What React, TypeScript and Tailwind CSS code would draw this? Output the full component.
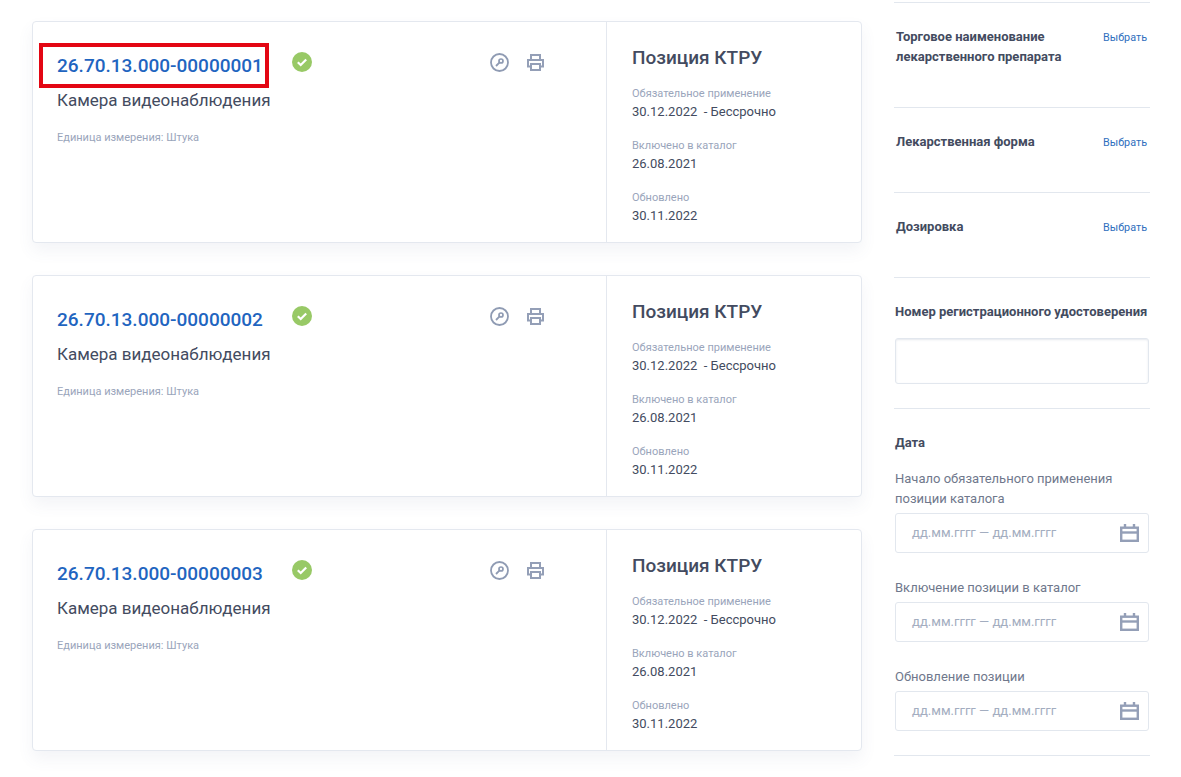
const CARDS = ['26.70.13.000-00000001', '26.70.13.000-00000002', '26.70.13.000-00000003']

function CheckBadge() {
  return (
    <svg width="20" height="20" viewBox="0 0 20 20">
      <circle cx="10" cy="10" r="10" fill="#98c966" />
      <path d="M5.8 10.2l2.9 2.8 5.5-5.6" fill="none" stroke="#fff" strokeWidth="2.2" />
    </svg>
  )
}

function KeyIcon() {
  return (
    <svg width="19" height="19" viewBox="0 0 19 19" fill="none" stroke="#8f9bb3">
      <circle cx="9.5" cy="9.5" r="8.5" strokeWidth="1.8" />
      <circle cx="11" cy="8" r="2" strokeWidth="1.7" />
      <path d="M9.6 9.4L6 13" strokeWidth="1.8" />
    </svg>
  )
}

function PrintIcon() {
  return (
    <svg width="17" height="17" viewBox="0 0 17 17" fill="none" stroke="#949fb7" strokeWidth="2">
      <path d="M4 6V1h9v5" />
      <path d="M4 12.5H1V6h15v6.5h-3" />
      <path d="M4 10h9v6H4z" />
    </svg>
  )
}

function CalendarIcon() {
  return (
    <svg width="19" height="18" viewBox="0 0 19 18" fill="none" stroke="#949fb7" strokeWidth="2.4">
      <rect x="1.2" y="3.7" width="16.6" height="13.1" />
      <path d="M1 8.5h17" />
      <path d="M5 0v4M14 0v4" />
    </svg>
  )
}

function Meta({ label, value }: { label: string; value: string }) {
  return (
    <div className="h-[52px]">
      <div className="text-[11px] leading-[16px] text-[#9aa5bb]">{label}</div>
      <div className="mt-[1px] text-[13px] leading-[18px] text-[#434b60] whitespace-pre">{value}</div>
    </div>
  )
}

function Card({ code, marked }: { code: string; marked?: boolean }) {
  return (
    <div className="relative flex h-[222px] rounded-[4px] border border-[#e4e8ef] bg-white shadow-[0_8px_16px_rgba(90,105,140,0.07)]">
      <div className="w-[573px] shrink-0 pl-[24px] pt-[31px]">
        <div className="flex items-start">
          <a className="-mt-[2px] w-[235px] text-[19px] leading-[30px] font-medium text-[#1f65c0]">{code}</a>
          <div className="-mt-[1px]">
            <CheckBadge />
          </div>
          <div className="ml-[178px] flex items-center gap-[18px]">
            <KeyIcon />
            <PrintIcon />
          </div>
        </div>
        <div className="mt-[7px] text-[17px] leading-[24px] text-[#434b60]">Камера видеонаблюдения</div>
        <div className="mt-[18px] text-[11px] leading-[16px] text-[#9aa5bb]">Единица измерения: Штука</div>
      </div>
      <div className="flex-1 border-l border-[#e4e8ef] pl-[25px] pt-[22px]">
        <div className="text-[19px] leading-[28px] font-medium text-[#434b60]">Позиция КТРУ</div>
        <div className="mt-[14px]">
          <Meta label="Обязательное применение" value="30.12.2022  - Бессрочно" />
          <Meta label="Включено в каталог" value="26.08.2021" />
          <Meta label="Обновлено" value="30.11.2022" />
        </div>
      </div>
      {marked && (
        <div className="absolute left-[6px] top-[21px] h-[45px] w-[230px] border-[4px] border-[#e30613]" />
      )}
    </div>
  )
}

function PickRow({ title, height }: { title: string; height: string }) {
  return (
    <div className={`flex items-start justify-between border-b border-[#e2e7ee] pl-[2px] pr-[3px] pt-[24px] ${height}`}>
      <div className="w-[190px] text-[13px] leading-[20px] font-bold text-[#434b60]">{title}</div>
      <a className="mt-[1px] text-[10.8px] leading-[20px] text-[#2f6fbe]">Выбрать</a>
    </div>
  )
}

function DateField({ label, first }: { label: string; first?: boolean }) {
  return (
    <div className={first ? 'mt-[16px]' : 'mt-[25px]'}>
      <div className="w-[240px] text-[13px] leading-[20px] text-[#6f788c]">{label}</div>
      <div className="mt-[4px] flex h-[40px] items-center justify-between rounded-[3px] border border-[#e2e7ee] bg-white pl-[16px] pr-[9px]">
        <span className="text-[13px] text-[#a3adc0]">дд.мм.гггг — дд.мм.гггг</span>
        <CalendarIcon />
      </div>
    </div>
  )
}

export default function App() {
  return (
    <div className="flex h-[777px] w-[1181px] overflow-hidden bg-white font-['Roboto',sans-serif]">
      <div className="ml-[32px] flex w-[830px] shrink-0 flex-col gap-[32px] pt-[21px]">
        {CARDS.map((code, i) => (
          <Card key={code} code={code} marked={i === 0} />
        ))}
      </div>
      <aside className="ml-[32px] w-[256px] pt-[2px]">
        <div className="border-t border-[#e2e7ee]">
          <PickRow title="Торговое наименование лекарственного препарата" height="h-[105px]" />
          <PickRow title="Лекарственная форма" height="h-[85px]" />
          <PickRow title="Дозировка" height="h-[85px]" />
        </div>
        <div className="h-[131px] border-b border-[#e2e7ee] pl-[1px] pr-[1px] pt-[24px]">
          <div className="whitespace-nowrap text-[13px] leading-[20px] font-bold text-[#434b60]">
            Номер регистрационного удостоверения
          </div>
          <input className="mt-[16px] block h-[46px] w-full rounded-[3px] border border-[#e2e7ee] shadow-[inset_0_1px_2px_rgba(90,105,140,0.15)]" />
        </div>
        <div className="h-[347px] border-b border-[#e2e7ee] pl-[1px] pr-[1px] pt-[24px]">
          <div className="text-[13px] leading-[20px] font-bold text-[#434b60]">Дата</div>
          <DateField first label="Начало обязательного применения позиции каталога" />
          <DateField label="Включение позиции в каталог" />
          <DateField label="Обновление позиции" />
        </div>
      </aside>
    </div>
  )
}
